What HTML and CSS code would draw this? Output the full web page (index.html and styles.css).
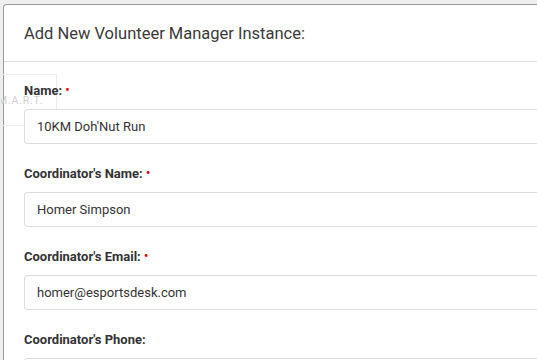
FILE: index.html
```html
<!DOCTYPE html>
<html>
<head>
<meta charset="utf-8">
<link rel="stylesheet" href="styles.css">
</head>
<body>
<div class="modal">
  <div class="modal-header">
    <h4 class="modal-title">Add New Volunteer Manager Instance:</h4>
  </div>
  <div class="modal-body">
    <div class="ghost"><span>S.M.A.R.T.</span></div>
    <div class="form-group">
      <label class="label">Name: <span class="req">•</span></label>
      <div class="input">10KM Doh'Nut Run</div>
    </div>
    <div class="form-group">
      <label class="label">Coordinator's Name: <span class="req">•</span></label>
      <div class="input">Homer Simpson</div>
    </div>
    <div class="form-group">
      <label class="label">Coordinator's Email: <span class="req">•</span></label>
      <div class="input">homer@esportsdesk.com</div>
    </div>
    <div class="form-group">
      <label class="label">Coordinator's Phone:</label>
      <div class="input"></div>
    </div>
  </div>
</div>
</body>
</html>
```
FILE: styles.css
```css
html, body {
  margin: 0;
  padding: 0;
  height: 100%;
  overflow: hidden;
}
body {
  background: #efefef;
  font-family: Roboto, "Liberation Sans", sans-serif;
  color: #333;
  padding: 4px 0 0 3px;
  box-sizing: border-box;
}
.modal {
  position: relative;
  background: #fff;
  border-left: 1px solid #9a9a9a;
  border-top: 1px solid #9a9a9a;
  border-top-left-radius: 4px;
  width: 600px;
  height: 400px;
}
.modal-header {
  height: 56px;
  border-bottom: 1px solid #dedede;
  padding-left: 20px;
  display: flex;
  align-items: center;
}
.modal-title {
  margin: 0;
  font-weight: 400;
  font-size: 16.5px;
  color: #3a3a3a;
  line-height: 20px;
  padding-top: 1px;
}
.modal-body {
  position: relative;
  padding: 21px 0 0 20px;
}
.ghost {
  position: absolute;
  left: -4px;
  top: 12px;
  width: 57px;
  height: 52px;
  border: 1px solid #ececec;
  box-sizing: border-box;
  overflow: hidden;
  display: flex;
  align-items: center;
  justify-content: flex-end;
}
.ghost span {
  color: #cfcfcf;
  font-size: 10.5px;
  letter-spacing: 0.8px;
  white-space: nowrap;
  margin-right: 13px;
  margin-top: 1px;
}
.form-group {
  margin-bottom: 22px;
}
.label {
  position: relative;
  display: block;
  height: 16px;
  font-size: 13px;
  font-weight: 700;
  line-height: 16px;
  color: #333;
  margin-bottom: 10px;
}
.req {
  color: #e00000;
  font-size: 12px;
  line-height: 0;
  vertical-align: 1px;
}
.input {
  position: relative;
  background: #fff;
  height: 35px;
  box-sizing: border-box;
  border: 1px solid #dcdcdc;
  border-radius: 3px;
  padding: 0 12px;
  font-size: 13px;
  line-height: 33px;
  color: #333;
  width: 560px;
}
```
